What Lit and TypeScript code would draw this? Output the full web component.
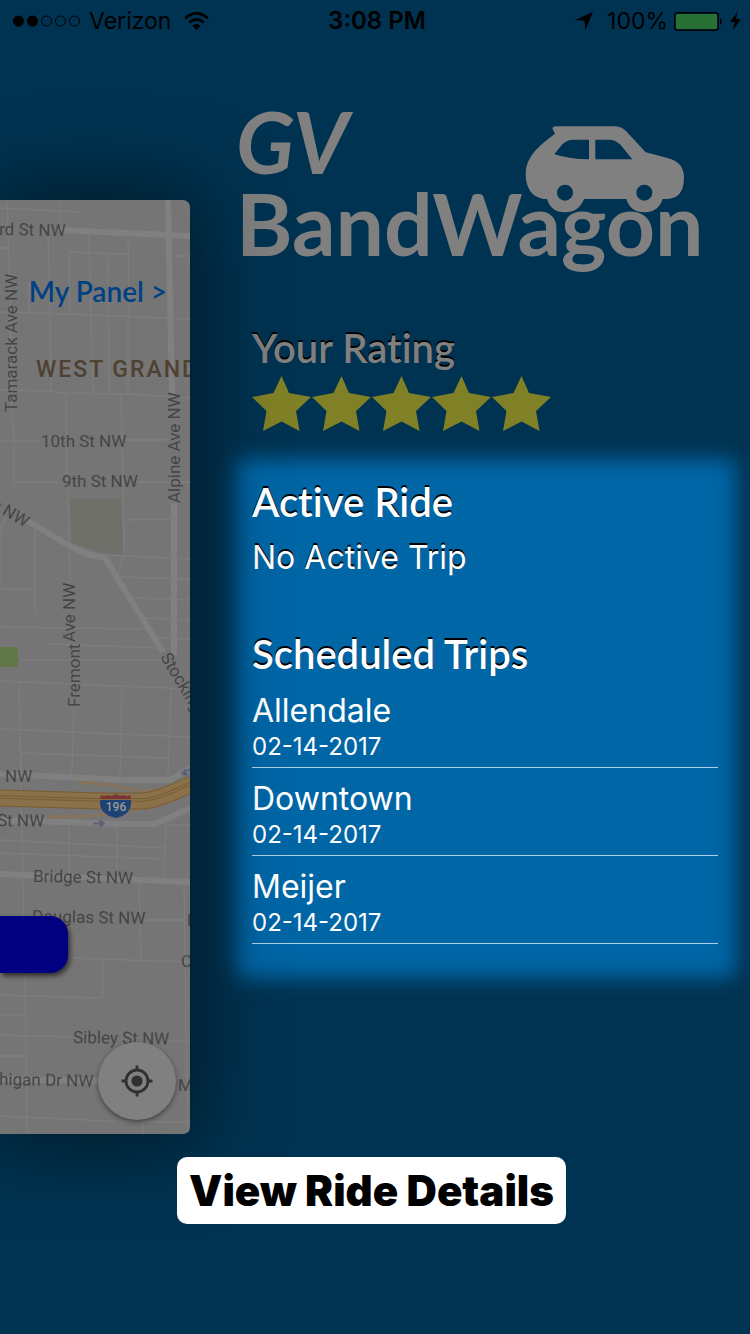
import { LitElement, html, css, svg } from "lit";
import { customElement, property } from "lit/decorators.js";

interface Trip {
  place: string;
  date: string;
}

const trips: Trip[] = [
  { place: "Allendale", date: "02-14-2017" },
  { place: "Downtown", date: "02-14-2017" },
  { place: "Meijer", date: "02-14-2017" },
];

@customElement("status-bar")
class StatusBar extends LitElement {
  static styles = css`
    :host {
      display: grid;
      grid-template-columns: 1fr auto 1fr;
      align-items: center;
      height: 42px;
      padding: 0 9px 0 13px;
      color: #000;
      font: 400 23px/28px Inter, "Liberation Sans", sans-serif;
    }
    .side {
      display: flex;
      align-items: center;
    }
    .end {
      justify-content: flex-end;
    }
    .time {
      font-size: 24px;
      font-weight: 600;
    }
    .signal {
      margin-right: 9px;
    }
    .wifi {
      margin-left: 13px;
    }
    .arrow {
      margin-right: 14px;
    }
    .battery {
      margin: 0 6px;
    }
  `;

  render() {
    return html`
      <div class="side">
        <svg class="signal" width="67" height="12" viewBox="0 0 67 12" aria-label="Signal">
          <circle cx="5.5" cy="6" r="5.5" />
          <circle cx="19.5" cy="6" r="5.5" />
          ${[33.5, 47.5, 61.5].map(
            (x) => svg`<circle cx=${x} cy="6" r="5" fill="none" stroke="#000" />`
          )}
        </svg>
        <span>Verizon</span>
        <svg class="wifi" width="25" height="18" viewBox="0 0 25 18" aria-label="Wi-Fi">
          <g fill="none" stroke="#000" stroke-width="2.6">
            <path d="M1.2 6.2Q12.5-3.6 23.8 6.2" />
            <path d="M5.2 10.4Q12.5 4.2 19.8 10.4" />
          </g>
          <path d="M12.5 18L8.4 13.7Q12.5 10.4 16.6 13.7Z" />
        </svg>
      </div>
      <div class="time">3:08 PM</div>
      <div class="side end">
        <svg class="arrow" width="18" height="18" viewBox="0 0 18 18" aria-label="Location">
          <path d="M18 0L10.5 18L9.5 8.8L0 8Z" />
        </svg>
        <span>100%</span>
        <svg class="battery" width="50" height="19" viewBox="0 0 50 19" aria-label="Battery">
          <rect x="0.7" y="0.7" width="43.6" height="17.6" rx="3" fill="none" stroke="#000" stroke-width="1.4" />
          <rect x="2" y="2" width="41" height="15" rx="1.5" fill="#286f33" />
          <path d="M46 6Q49.5 9.5 46 13Z" />
        </svg>
        <svg width="11" height="18" viewBox="0 0 11 18" aria-label="Charging">
          <path d="M7.5 0L0 10H4.6L3 18L11 7H6Z" />
        </svg>
      </div>
    `;
  }
}

@customElement("map-card")
class MapCard extends LitElement {
  static styles = css`
    :host {
      display: block;
      position: relative;
      border-radius: 0 7px 7px 0;
      box-shadow: 0 0 80px 10px rgba(0, 0, 0, 0.52);
    }
    .map {
      display: block;
      width: 100%;
      border-radius: 0 7px 7px 0;
      font-family: Roboto, sans-serif;
      font-size: 17px;
    }
    .panel-link {
      position: absolute;
      top: 73px;
      right: 23px;
      color: #004184;
      font: 600 28px/36px Lato, sans-serif;
      text-decoration: none;
      white-space: nowrap;
    }
    .request {
      position: absolute;
      left: 0;
      top: 716px;
      width: 68px;
      height: 57px;
      border: 0;
      border-radius: 0 18px 18px 0;
      background: #000080;
      box-shadow: 2px 3px 5px rgba(0, 0, 0, 0.6);
    }
    .locate {
      position: absolute;
      right: 14px;
      bottom: 14px;
      display: grid;
      place-items: center;
      width: 78px;
      height: 78px;
      padding: 0;
      border: 0;
      border-radius: 50%;
      background: #808080;
      box-shadow: 0 2px 5px rgba(0, 0, 0, 0.45);
    }
  `;

  private label(x: number, y: number, text: string, angle = 0) {
    return svg`<text x=${x} y=${y} transform="rotate(${angle} ${x} ${y})">${text}</text>`;
  }

  render() {
    return html`
      <svg class="map" viewBox="0 200 190 934" aria-label="Map">
        <rect y="200" width="190" height="934" fill="#757575" />
        <path d="M70 499H121L123 555L103 553L72 543Z" fill="#70706a" />
        <rect y="647" width="18" height="20" fill="#62784a" />
        <g fill="none" stroke="#7d7d7d" stroke-width="1.4">
          <path d="M0 208L80 212M7 200L10 300L12 412L14 443V490M0 248H9M60 200V229" />
          <path d="M48 236L50 313L51 391M89 235L91 315L93 392M128 236L129 310L128 320V393" />
          <path d="M70 313L69 252L128 254M108 254L109 393M0 312L68 314L115 316L190 319M29 282V312" />
          <path d="M172 256H189V265M0 390L52 391L65 393L128 394L190 398M66 393L67 480M68 485L70 583" />
          <path d="M121 395L123 483L124 555L119 573M0 441H40M125 440H168M15 482H60M137 482H190" />
          <path d="M125 520L171 519M35 530V613M0 589H35M6 517L0 530V590M105 555L190 559M120 577L190 579" />
          <path d="M133 598L190 600M145 618L190 620M158 638L190 639M0 627L145 629M49 644L157 648M21 660H163" />
          <path d="M0 681L190 689M19 683L21 770M74 708L72 770L70 775M122 686L120 775M171 689L168 775" />
          <path d="M0 729L190 737M21 753L168 758M20 740L25 973L27 1133M69 826V873M117 826V873" />
          <path d="M0 840L165 848M0 853L165 859M190 825H166L164 877M139 883L141 960M184 883L186 1030L188 1133" />
          <path d="M143 920H186M68 958L190 962M103 960V997M0 995L103 998M0 1015H25M0 1035L72 1037" />
          <path d="M167 1041H190M0 1056H25M0 1116L107 1121L190 1122M143 1121V1133M185 1002H190" />
        </g>
        <g fill="none" stroke="#808080" stroke-width="6" stroke-linejoin="round">
          <path d="M60 230L190 236M168 200L172 395M174 503V655M28 521L68 545L87 554L105 558L163 652" />
          <path d="M0 774L127 780H170L190 768M0 820L127 824H155L190 808M0 874L190 882M0 1079L100 1081" />
        </g>
        <g fill="none" stroke="#85745a" stroke-width="3">
          <path d="M78 782L110 785L140 791L165 790M47 817L90 816L145 808" />
        </g>
        <g fill="none">
          <path d="M-2 798L100 801H143C162 799 175 791 192 784" stroke="#7a5c30" stroke-width="17" />
          <path d="M-2 798L100 801H143C162 799 175 791 192 784" stroke="#8a714a" stroke-width="15" />
          <path d="M-2 797L100 800H143C162 798 175 790 192 783" stroke="#7a5c30" stroke-width="3.5" />
          <path d="M-2 797L100 800H143C162 798 175 790 192 783" stroke="#8a714a" stroke-width="1.5" />
        </g>
        <g fill="#5d6278" stroke="#5d6278">
          <path d="M93 823.5H102" stroke-width="2" />
          <path d="M100 820L105 823.5L100 827Z" />
          <path d="M190 769L184 772.5" stroke-width="2" />
          <path d="M185 769L181 774L187 775Z" />
        </g>
        <path d="M100 800H131C132 811 125 816 116 818C106 816 99 811 100 800Z" fill="#1f4276" />
        <path d="M101 795Q104 797 108 795Q112 797 116 794Q120 797 123 795Q127 797 130 795L131 799H100Z" fill="#7a3436" />
        <text x="116" y="811" text-anchor="middle" font-size="12" fill="#9a9a9a" font-weight="500">196</text>
        <g fill="#454545">
          ${this.label(-1, 235, "rd St NW", 1)}
          ${this.label(17, 412, "Tamarack Ave NW", -90)}
          ${this.label(180, 503, "Alpine Ave NW", -90)}
          ${this.label(41, 447, "10th St NW")}
          ${this.label(62, 487, "9th St NW")}
          ${this.label(-10, 507, "e NW", 31)}
          ${this.label(75, 642, "Ave NW", -90)}
          ${this.label(80, 707, "Fremont", -90)}
          ${this.label(160, 657, "Stocking", 59)}
          ${this.label(5, 782, "NW")}
          ${this.label(-3, 826, "St NW", 1)}
          ${this.label(33, 882, "Bridge St NW", 1)}
          ${this.label(32, 922, "Douglas St NW", 1)}
          ${this.label(187, 926, "D")}
          ${this.label(181, 967, "C")}
          ${this.label(73, 1043, "Sibley St NW", 1)}
          ${this.label(-1, 1085, "higan Dr NW", 1)}
          ${this.label(178, 1091, "M")}
        </g>
        <text x="36" y="377" font-size="23" font-weight="500" letter-spacing="2" fill="#4f4131">WEST GRAND</text>
      </svg>
      <a class="panel-link" href="#panel">My Panel &gt;</a>
      <button class="request" aria-label="Request ride"></button>
      <button class="locate" aria-label="My location">
        <svg width="32" height="32" viewBox="0 0 32 32">
          <circle cx="16" cy="16" r="5.6" fill="#303030" />
          <circle cx="16" cy="16" r="11" fill="none" stroke="#303030" stroke-width="2.8" />
          <path d="M16 0.5V5M16 27V31.5M0.5 16H5M27 16H31.5" stroke="#303030" stroke-width="2.8" />
        </svg>
      </button>
    `;
  }
}

@customElement("star-rating")
class StarRating extends LitElement {
  @property({ type: Number }) value = 5;

  static styles = css`
    :host {
      display: flex;
      gap: 1px;
    }
    .star {
      display: block;
      fill: #808026;
    }
  `;

  render() {
    return Array.from(
      { length: this.value },
      () => html`
        <svg class="star" width="59" height="55" viewBox="0 0 59 55">
          <path d="M29.5 0L37 17L59 21L44 35L47.5 55L29.5 45.5L11 55L14.5 35L0 21L21.5 17Z" />
        </svg>
      `
    );
  }
}

@customElement("app-root")
class AppRoot extends LitElement {
  static styles = css`
    :host {
      display: flex;
      flex-direction: column;
      min-height: 100vh;
      overflow: hidden;
      background: #003351;
      color: #fff;
      font-family: Inter, "Liberation Sans", sans-serif;
    }
    .stage {
      display: grid;
      grid-template-columns: 190fr 560fr;
      align-items: start;
    }
    .card {
      z-index: 1;
      margin-top: 158px;
    }
    .menu {
      padding: 58px 14px 0 46px;
    }
    .logo {
      position: relative;
      width: fit-content;
      margin: 0;
      color: #808080;
      font: 700 86px/82px Lato, sans-serif;
    }
    .line {
      display: block;
    }
    .slanted {
      font-style: italic;
    }
    .car {
      position: absolute;
      left: 289px;
      top: 25px;
    }
    .heading {
      margin: 0;
      font: 600 40px/52px Lato, sans-serif;
      font-variant-ligatures: none;
      text-shadow: 0 -2px 0 #000;
    }
    .rating {
      padding: 58px 16px 28px;
      color: #808080;
    }
    .stars {
      margin-top: 2px;
    }
    .rides {
      padding: 17px 18px 34px 16px;
      border-radius: 8px;
      background: #0066a6;
      box-shadow: 0 0 20px #0066a6, inset 0 0 20px #003351;
    }
    .empty {
      margin: 0 0 40px;
      font-size: 32px;
      line-height: 60px;
      text-shadow: 0 -2px 0 #000;
    }
    .trips {
      margin: 0;
      padding: 0;
      list-style: none;
    }
    .trip {
      padding: 9px 0 6px;
      border-bottom: 1px solid #b3d1e4;
    }
    .place {
      font-size: 32px;
      line-height: 44px;
    }
    .date {
      font-size: 24px;
      line-height: 28px;
    }
    .details {
      z-index: 2;
      align-self: center;
      margin: 23px 7px 0 0;
      padding: 0 12px;
      border: 0;
      border-radius: 10px;
      background: #fff;
      color: #000;
      font: 900 42px/67px Inter, sans-serif;
    }
  `;

  render() {
    return html`
      <status-bar></status-bar>
      <main class="stage">
        <map-card class="card"></map-card>
        <div class="menu">
          <h1 class="logo">
            <span class="line slanted">GV</span>
            <span class="line">BandWagon</span>
            <svg class="car" width="160" height="88" viewBox="900 105 480 264" aria-hidden="true">
              <path
                fill="#808080"
                fill-rule="evenodd"
                d="M982 115Q984 109 992 109H1165Q1190 109 1205 125L1262 187L1325 203Q1377 215 1377 262Q1377 327 1325 327H1313Q1300 367 1258 367Q1216 367 1204 327H1077Q1062 367 1020 367Q978 367 966 327H955Q902 318 902 250Q902 215 930 183Q950 160 990 131ZM988 193L1010 165Q1025 149 1045 149H1092V208Q1035 208 988 193ZM1111 149H1155Q1170 149 1185 163L1222 208H1111ZM1044 308A24 24 0 1 0 996 308A24 24 0 1 0 1044 308ZM1282 308A24 24 0 1 0 1234 308A24 24 0 1 0 1282 308Z"
              />
            </svg>
          </h1>
          <section class="rating">
            <h2 class="heading">Your Rating</h2>
            <star-rating class="stars" value="5"></star-rating>
          </section>
          <section class="rides">
            <h2 class="heading">Active Ride</h2>
            <p class="empty">No Active Trip</p>
            <h2 class="heading">Scheduled Trips</h2>
            <ul class="trips">
              ${trips.map(
                (trip) => html`
                  <li class="trip">
                    <div class="place">${trip.place}</div>
                    <div class="date">${trip.date}</div>
                  </li>
                `
              )}
            </ul>
          </section>
        </div>
      </main>
      <button class="details">View Ride Details</button>
    `;
  }
}
